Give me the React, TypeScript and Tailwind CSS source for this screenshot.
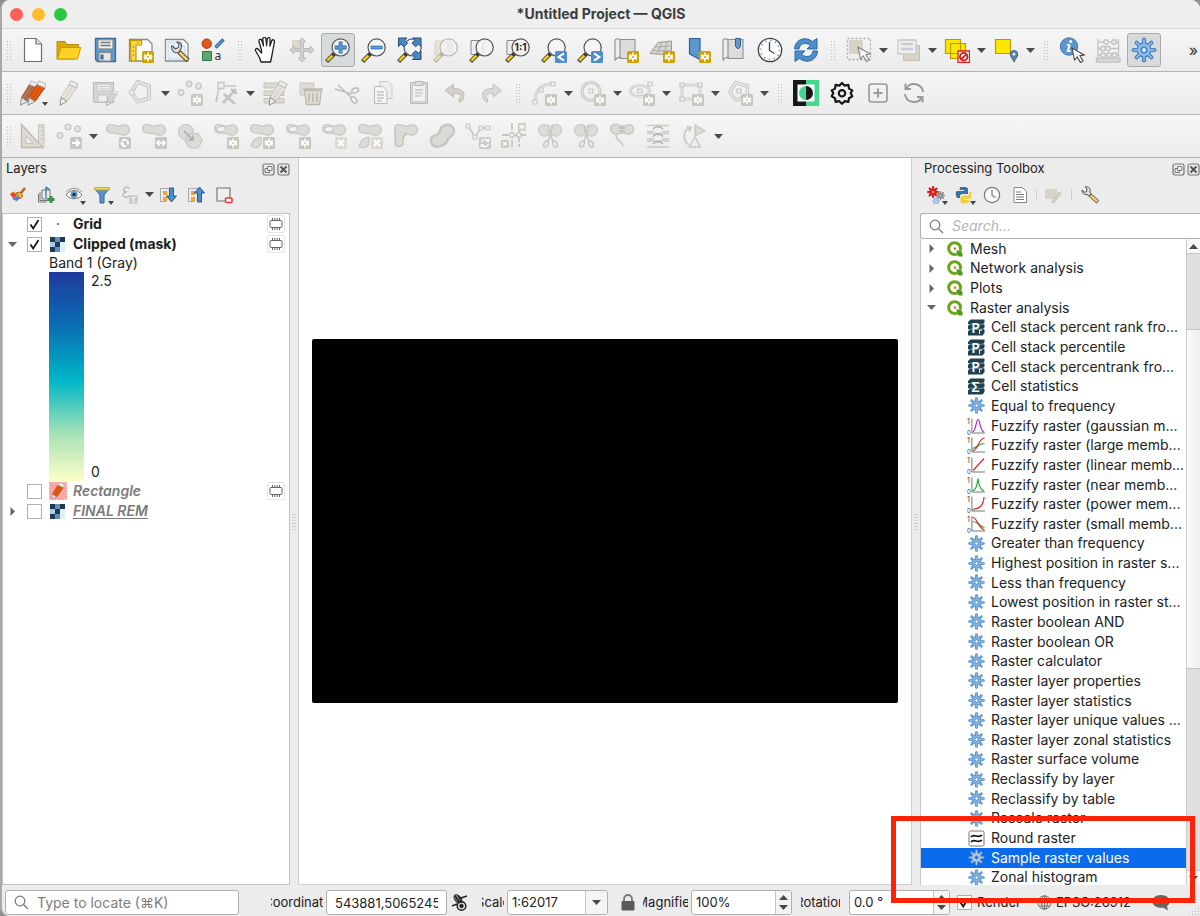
import React, { useState } from 'react';

type Tool = { name: string; icon?: React.ReactNode; menu?: boolean; corner?: boolean; active?: boolean };

const FONT = "font-['Inter','Liberation_Sans',sans-serif]";

// ---------- Drawing helpers ----------

const rays = [0, 45, 90, 135, 180, 225, 270, 315];

function Gear({ cx = 8, cy = 8, r = 7, line = '#4a86c5', fill = '#86b4e4', hole = '#ffffff' }: {
  cx?: number; cy?: number; r?: number; line?: string; fill?: string; hole?: string;
}) {
  const spokes = (width: number, reach: number, color: string) => rays.map((a) => {
    const t = (a * Math.PI) / 180;
    return (
      <line key={`${width}${a}`} x1={cx} y1={cy} x2={cx + Math.sin(t) * reach} y2={cy - Math.cos(t) * reach}
        stroke={color} strokeWidth={width} strokeLinecap="round" />
    );
  });
  return (
    <g>
      {spokes(r * 0.33, r * 0.83, line)}
      <circle cx={cx} cy={cy} r={r * 0.6} fill={line} />
      {spokes(r * 0.14, r * 0.83, fill)}
      <circle cx={cx} cy={cy} r={r * 0.5} fill={fill} />
      <circle cx={cx} cy={cy} r={r * 0.22} fill={hole} stroke={line} strokeWidth={r * 0.12} />
    </g>
  );
}

function Badge({ x = 14, y = 14, fill = '#cfa200', kind = 'star' }: { x?: number; y?: number; fill?: string; kind?: string }) {
  return (
    <g transform={`translate(${x} ${y})`} stroke="#fff" fill="none" strokeWidth="1.5">
      <rect width="12" height="12" rx="1.6" fill={fill} stroke="none" />
      {kind === 'star' && (
        <>
          <path d="M6 1.5v9M2.100 3.700l7.800 4.600M9.900 3.700l-7.800 4.600M1.700 6h8.600" />
          <circle cx="6" cy="6" r="2.4" fill="#fff" stroke="none" />
          <circle cx="6" cy="6" r="1" fill={fill} stroke="none" />
        </>
      )}
      {kind === 'x' && <path d="M3 3l6 6M9 3l-6 6" strokeWidth="2" />}
      {kind === 'right' && <path d="M2 6h6M6 2.8L9.2 6 6 9.2" strokeWidth="2.2" />}
      {kind === 'both' && <path d="M2.5 6h7M4.6 3.4L2 6l2.6 2.6M7.4 3.4L10 6 7.4 8.6" strokeWidth="1.7" />}
      {kind === 'turn' && <path d="M4.2 8.8a3.2 3.2 0 1 1 4.4-1.4M4 6l.4 3.4 3-.8" strokeWidth="1.6" />}
      {kind === 'prev' && <path d="M9 2.4L3.6 6 9 9.6" strokeWidth="2" />}
      {kind === 'next' && <path d="M3 2.4L8.4 6 3 9.6" strokeWidth="2" />}
      {kind === 'cycle' && <path d="M2.4 5.4a3.7 3.7 0 0 1 6.6-1.6M9.6 2v2.4H7M9.6 6.6A3.7 3.7 0 0 1 3 8.2M2.4 10V7.6H5" strokeWidth="1.4" />}
    </g>
  );
}

function Lens({ children }: { children?: React.ReactNode }) {
  return (
    <g>
      <path d="M9.8 16.200L1.6 24.4" stroke="#3d3d3d" strokeWidth="4.200" />
      <path d="M7.4 18.600L2.300 23.700" stroke="#f6cf22" strokeWidth="2.4" />
      <circle cx="15.6" cy="10.4" r="8.6" fill="#f4f4f4" fillOpacity="0.92" stroke="#555" strokeWidth="1.2" />
      {children}
    </g>
  );
}

const GREY = '#c6c6c3';
const PALE = '#dcdbd7';
const BLOB = 'M1.6 5.5C1.6 1.2 6 .8 9.6 2.4S15 3 18 2s6.4 1.4 6.4 4.8-2.6 5.8-6 5.4-5-2.2-8.800-2-8-.7-8-4.700z';

const Blob = ({ inner }: { inner?: boolean }) => (
  <>
    <path d={BLOB} fill={PALE} stroke={GREY} strokeWidth="1.2" />
    {inner && <ellipse cx="8" cy="6.200" rx="4.4" ry="2.600" fill="#f3f3f3" stroke={GREY} strokeWidth="1.2" transform="rotate(-10 8 6)" />}
  </>
);

const LowerBlob = () => <path d="M12 14c-5 0-9 5-10 9 3 3 8 2 10-2z" fill={PALE} stroke={GREY} strokeWidth="1.2" />;

const Dots = () => (
  <g fill="#e6e6e3" stroke={GREY} strokeWidth="1.3">
    <circle cx="12" cy="4" r="2.8" /><circle cx="21.500" cy="6" r="2.8" /><circle cx="4" cy="12.500" r="2.800" />
  </g>
);

const Page = ({ x = 1.5 }: { x?: number }) => (
  <path d={`M${x} 2.500h18l4.500 4.500v17H${x}z`} fill="#fff" stroke="#8a8a8a" strokeWidth="1.300" />
);

const Pencil = ({ body = '#e8590c', edge = '#a33b06', tip = '#e8e4da' }: { body?: string; edge?: string; tip?: string }) => (
  <g strokeWidth="0.9" strokeLinejoin="round">
    <path d="M13 4.500l7.800 3.300L11 21.500 5 17.500z" fill={body} stroke={edge} />
    <path d="M16.900 6.200L8 19.500" stroke={edge} strokeOpacity="0.6" fill="none" />
    <path d="M5 17.500l6 4L4 25.200z" fill={tip} stroke="#888" />
    <path d="M13 4.500L14.800.8l7.200 3-1.200 4z" fill="#ededed" stroke="#b5b5b5" />
  </g>
);

const Wrench = () => (
  <g>
    <path d="M15 15l9 8.500" stroke="#444" strokeWidth="4.600" />
    <path d="M15.500 15.500l8 7.500" stroke="#f0d264" strokeWidth="2.800" />
    <path d="M8.500 9l3 3 3-1.500.5-3-2-2.500c4 0 5 3 4.200 6l-2.200 4c-4 2-7.500-.5-7.500-6z" fill="#e4e4e4" stroke="#555" strokeWidth="1.100" />
  </g>
);

const Scissors = () => (
  <>
    <path d="M12 3C8 0 1 2 1.500 7s4 8 10 5zM14 3c4-3 11-1 10.500 4s-4 8-10 5z" fill={PALE} stroke={GREY} />
    <path d="M11 2l5 17M16 2L11 19" stroke={GREY} strokeWidth="1.500" fill="none" />
    <ellipse cx="9" cy="21" rx="2" ry="3.500" transform="rotate(25 9 21)" fill="none" stroke={GREY} strokeWidth="1.500" />
    <ellipse cx="18" cy="21" rx="2" ry="3.500" transform="rotate(-25 18 21)" fill="none" stroke={GREY} strokeWidth="1.500" />
  </>
);

const Roll = () => (
  <>
    <path d="M5 2.500h17v19H8c-1-3-5-2-5 1z" fill="#dcdcda" stroke="#8f8f8f" strokeWidth="1.100" />
    <path d="M2 4c0-3 5-3 5 0v17c-2-1-4 0-4.500 2C1.800 24 2 22 2 20z" fill="#eeeeec" stroke="#8f8f8f" strokeWidth="1.100" />
  </>
);

const Cursor = ({ x = 13, y = 11 }: { x?: number; y?: number }) => (
  <path transform={`translate(${x} ${y})`} d="M0 0l2.500 12 2.700-3 3.300 5.500 2.600-1.600-3.200-5.200 4.300-.7z" fill="#fff" stroke="#444" strokeWidth="1.100" />
);

const Corners = () => (
  <g fill="#4a86c0" stroke="#234f7c" strokeWidth="1">
    <path d="M1.500 1h8.500L7.800 3.300l2.700 2.900-3.600 3.600-3-2.800-2.400 2.500z" />
    <path d="M24 1h-8.500l2.200 2.300L15 6.200l3.600 3.600 3-2.800L24 9.500z" />
    <path d="M24 22.500h-8.500l2.200-2.300-2.700-2.900 3.600-3.600 3 2.800 2.400-2.500z" />
  </g>
);

// ---------- Main toolbars ----------

const fileTools: Tool[] = [
  { name: 'New project', icon: <><path d="M4.500 1.500h11.500l5.500 5.500v17.500h-17z" fill="#fff" stroke="#6e6e6e" strokeWidth="1.200" /><path d="M16 1.500V7h5.500" fill="#e6e6e6" stroke="#6e6e6e" strokeWidth="1.200" /></> },
  { name: 'Open project', icon: <><path d="M1 4.500h8l2 3h11.500V12L19 22H1z" fill="#d9a90a" stroke="#b98d00" /><path d="M5 10.500h19.700L21.500 22H1.500L3 17z" fill="#fdd222" stroke="#c69a00" /></> },
  { name: 'Save project', icon: <><path d="M3.500 1.500h20v23h-18l-2-2z" fill="#5f97cd" stroke="#3a6b9b" strokeWidth="1.300" /><path d="M6.500 3h14v8.500h-14z" fill="#eee" stroke="#aaa" /><path d="M8.500 5.500h10M8.500 8.500h10" stroke="#777" strokeWidth="1.300" /><path d="M7 15.500h12v8.500H7z" fill="#e5e5e5" stroke="#888" /><path d="M8.500 17.500h3v5h-3z" fill="#3a6b9b" /></> },
  { name: 'New print layout', icon: <><Page /><path d="M2.500 3.500h11V8H8v16H3z" fill="#fbd64d" stroke="#c59a00" strokeWidth="1.200" /><path d="M5.500 9v2M5.500 13v2M5.500 17v2M9 5.500h2" stroke="#c59a00" /><Badge /></> },
  { name: 'Layout manager', icon: <><Page /><path d="M4 5h14v4h3v13H4z" fill="#e8f0f9" stroke="#bcd4ec" /><Wrench /></> },
  { name: 'Style manager', icon: <><circle cx="6.700" cy="6.700" r="4.700" fill="#e2561f" stroke="#a33b0a" /><path d="M15.500 10.500l8-8" stroke="#2d5f94" strokeWidth="3.400" /><path d="M16 10l7-7" stroke="#6ba3db" strokeWidth="1.200" /><path d="M2.500 14.500h9v9h-9z" fill="#5ea873" stroke="#2f7546" /><text x="14.500" y="23" fontSize="12" fill="#333" fontFamily="Noto Sans, sans-serif">a</text></> },
];

const navTools: Tool[] = [
  { name: 'Pan map', icon: <path d="M8.500 13L6 4.500C5.500 2 8.500 1.500 9 4l1.500 5-.7-6.500C9.600-.2 12.600-.3 13 2.300l.6 6.200.6-6.200c.3-2.400 3-2 2.900.4l-.2 6.300 1.700-5c.8-2.100 3.300-1.200 2.800 1L19 18l-1.500 7H8l-1.500-4.500L3 14.500C1.300 11.800 4 10.500 5.500 12.500L8.500 16z" fill="#fff" stroke="#1f1f1f" strokeWidth="1.300" strokeLinejoin="round" /> },
  { name: 'Pan to selection', icon: <><path d="M3 3h12v12H3z" fill="#ddd8ce" /><path d="M13 1l4 4h-2.500v6.500H21V9l4 4-4 4v-2.500h-6.500V21H17l-4 4-4-4h2.500v-6.500H5V17l-4-4 4-4v2.500h6.500V5H9z" fill="#cfcfcf" stroke="#bbb" /></> },
  { name: 'Zoom in', active: true, icon: <Lens><path d="M15.600 4.500v12M9.600 10.500h12" stroke="#2b6ca8" strokeWidth="3.800" /><path d="M15.600 5v11M10 10.500h11" stroke="#5c9ad6" strokeWidth="2.200" /></Lens> },
  { name: 'Zoom out', icon: <Lens><path d="M9.600 10.500h12" stroke="#2b6ca8" strokeWidth="3.600" /><path d="M10 10.500h11" stroke="#5c9ad6" strokeWidth="2" /></Lens> },
  { name: 'Zoom full', icon: <><Lens /><Corners /></> },
  { name: 'Zoom to selection', icon: <g opacity="0.35"><path d="M2 4h14v14H2z" fill="#d8c7a8" stroke="#999" /><Lens><path d="M14 3h6v14h-6z" fill="#ddd" /></Lens></g> },
  { name: 'Zoom to layer', icon: <><path d="M2 3.500h14v14H2z" fill="#eee" stroke="#888" /><Lens><path d="M14 5v11" stroke="#ddd" /></Lens></> },
  { name: 'Zoom to native resolution', icon: <><path d="M2 3.500h14v14H2z" fill="#eee" stroke="#888" /><Lens><text x="15.600" y="14" fontSize="10" fontWeight="700" textAnchor="middle" fill="#222" fontFamily="Inter, sans-serif">1:1</text></Lens></> },
  { name: 'Zoom last', icon: <><Lens /><Badge fill="#4f8cc9" kind="prev" /></> },
  { name: 'Zoom next', icon: <><Lens /><Badge fill="#4f8cc9" kind="next" /></> },
  { name: 'New map view', icon: <><Roll /><Badge /></> },
  { name: 'New 3D map view', icon: <><path d="M9 5.500L22.500 4v14L1 16.500z" fill="#d6d6d3" stroke="#999" /><path d="M6 10l16.500-1M3.500 13.500l19 .5M13 5L8 17M18 4.500l-3 13" stroke="#aaa" fill="none" /><Badge /></> },
  { name: 'New spatial bookmark', icon: <><path d="M4.500 1.500H15v21L4.500 17z" fill="#5f97cd" stroke="#33618f" strokeWidth="1.200" /><Badge /></> },
  { name: 'Show spatial bookmarks', icon: <><Roll /><path d="M14.500 1.500h5v8l-2.500 2.500-2.500-2.500z" fill="#5f97cd" stroke="#33618f" /></> },
  { name: 'Temporal controller', icon: <><circle cx="13" cy="13" r="11.700" fill="#fdfdfd" stroke="#444" strokeWidth="1.300" /><circle cx="13" cy="13" r="9.500" fill="none" stroke="#5b93cc" strokeWidth="1.800" strokeDasharray="1.200 3.770" /><path d="M12.500 5v8.500l5 3" stroke="#444" strokeWidth="1.300" fill="none" /></> },
  { name: 'Refresh', icon: <g fill="#4d8dcc" stroke="#2c68a3" strokeWidth="1" strokeLinejoin="round"><path d="M1.500 12C2 4 9 0 16 2.500l3.500 2L24 1.500V12H14l3.500-3.500C13 5 7 6 6 12z" /><path d="M24.500 14C24 22 17 26 10 23.500l-3.500-2L2 24.500V14h10l-3.500 3.500C13 21 19 20 20 14z" /></g> },
];

const selectTools: Tool[] = [
  { name: 'Select features', menu: true, icon: <><path d="M3 3h14v14H3z" fill="#d9d2c7" /><path d="M1.500 1.500h23v21h-23z" fill="none" stroke="#aaa" strokeWidth="1.300" strokeDasharray="2 2" /><g opacity="0.6"><Cursor x={12} y={10} /></g></> },
  { name: 'Select by value', menu: true, icon: <><path d="M8.500 8.500h16v15h-16z" fill="#d9d2c7" stroke="#c4beb4" /><path d="M3 3h18v14H3z" fill="#eee" stroke="#c9c9c9" strokeWidth="1.300" /><path d="M6 7h12M6 12h12" stroke="#ccc" strokeWidth="2.500" /></> },
  { name: 'Deselect features', menu: true, icon: <><path d="M1.500 2.500h15v14h-15zM6.500 6.500h15v15h-15z" fill="#fde600" stroke="#b89c00" strokeWidth="1.200" /><path d="M14 14h11.500v11.500H14z" fill="#fff" stroke="#e01b1b" strokeWidth="1.300" /><circle cx="19.700" cy="19.700" r="3.800" fill="none" stroke="#d61414" strokeWidth="1.800" /><path d="M17.200 22.300l5.200-5.200" stroke="#d61414" strokeWidth="1.800" /></> },
  { name: 'Select by location', menu: true, icon: <><path d="M2.500 2.500h15v14h-15z" fill="#fde600" stroke="#b89c00" strokeWidth="1.200" /><path d="M21 25c-1-3-3.700-5-3.700-7.800a3.700 3.700 0 0 1 7.400 0C24.700 20 22 22 21 25z" fill="#5b86a8" stroke="#3c6484" /><circle cx="21" cy="17.300" r="1.300" fill="#fff" /></> },
];

const attributeTools: Tool[] = [
  { name: 'Identify features', icon: <><circle cx="10" cy="9.500" r="8.700" fill="#5c96ce" stroke="#3f78b0" /><path d="M10.800 7.500l-2 6.500h2.800M8 8h2.800" stroke="#fff" strokeWidth="2" fill="none" /><circle cx="11.700" cy="4.500" r="1.500" fill="#fff" /><Cursor x={13} y={11} /></> },
  { name: 'Field calculator', icon: <g stroke="#c4c4c2" strokeWidth="1.400" fill="#eee"><path d="M3 2v20M23.500 2v20M3 5h20.500M3 11.500h20.500M3 18h20.500" /><path d="M1.500 21.500h23.500V25H1.500z" fill="#ddd" /><circle cx="11" cy="5" r="2.300" /><circle cx="19" cy="5" r="2.300" /><circle cx="8" cy="11.500" r="2.300" /><circle cx="13" cy="11.500" r="2.300" /><circle cx="8" cy="18" r="2.300" /><circle cx="14" cy="18" r="2.300" /><circle cx="19.500" cy="18" r="2.300" /></g> },
  { name: 'Processing toolbox', active: true, icon: <Gear cx={13} cy={13} r={12.5} line="#3f7fc4" fill="#8fbbe9" hole="#e9eef3" /> },
];

const editTools: Tool[] = [
  { name: 'Current edits', corner: true, icon: <><g transform="translate(-3.500 0)"><Pencil body="#bb7150" edge="#7c4a34" /></g><g transform="translate(4 0)"><Pencil /></g></> },
  { name: 'Toggle editing', icon: <Pencil body="#e5e2da" edge="#c2c0bb" tip="#f0efec" /> },
  { name: 'Save layer edits', icon: <><path d="M1.500 2.500h20v20H3l-1.500-1.500z" fill="#d6d6d4" stroke="#bbb" strokeWidth="1.200" /><path d="M5 4h13v7H5zM6 15h9v7H6z" fill="#eee" stroke="#c4c4c4" /><path d="M7 6.500h9M7 9h9" stroke="#c9c9c9" /><g transform="translate(12 10) scale(.62)"><Pencil body="#dcd8ce" edge="#b5b3ae" tip="#eee" /></g></> },
  { name: 'Digitize with segment', menu: true, icon: <><path d="M3.500 12.500L9.500 2l11.500 4v12.500l-11.500 3z" fill="none" stroke="#c6c6c3" strokeWidth="4" strokeLinejoin="round" /><path d="M3.500 12.500L9.500 2l11.500 4v12.500l-11.500 3z" fill="none" stroke="#e4e4e1" strokeWidth="2" /><circle cx="3.500" cy="12.500" r="2.500" fill="#eee" stroke={GREY} /></> },
  { name: 'Add point feature', icon: <><Dots /><Badge fill="#c9c6bd" /></> },
  { name: 'Vertex tool', menu: true, icon: <><path d="M7 6h16M6 8L3 22" stroke={GREY} strokeWidth="1.700" /><path d="M5 2.500h6v6H5z" fill="#eee" stroke={GREY} strokeWidth="1.300" /><path d="M11 14l11 10M23 9L10 23" stroke={GREY} strokeWidth="3" /><path d="M18 9l6 5" stroke="#bbb" strokeWidth="2" /></> },
  { name: 'Modify attributes', icon: <><path d="M2 3h20v5H2zM2 11h20v4.500H2zM2 18.500h20v4.500H2z" fill="#dedad1" stroke="#c6c3bc" /><g transform="translate(3 0)"><Pencil body="#e5e2da" edge="#c2c0bb" tip="#eee" /></g></> },
  { name: 'Delete selected', icon: <><path d="M2 3h14v12H2z" fill="#e0dcd3" stroke={GREY} /><path d="M6.500 10.500h17l-2 14h-13z" fill="#e1ded6" stroke="#bcb9b1" strokeWidth="1.300" /><path d="M5 9h20M11 13v9M15 13v9M19 13v9" stroke="#bcb9b1" strokeWidth="1.600" /></> },
  { name: 'Cut features', icon: <g stroke="#bdbdbb" strokeWidth="1.500" fill="none"><path d="M1 9l17 5M4 5l14 13" /><ellipse cx="21" cy="10.500" rx="3.500" ry="2.300" transform="rotate(-20 21 10)" /><ellipse cx="20" cy="20" rx="3.500" ry="2.500" transform="rotate(50 20 20)" /></g> },
  { name: 'Copy features', icon: <g stroke="#cbcbc9" fill="#eee"><path d="M10 1.500h8l4 4v13H10z" /><path d="M4.500 6.500H13l4 4v13H4.500z" stroke="#bbb" fill="#f6f6f6" /><path d="M7 12h7M7 15h7M7 18h7M7 21h5" stroke="#aaa" /></g> },
  { name: 'Paste features', icon: <><path d="M4.500 2.500h17v21h-17z" fill="#ddd9cf" stroke="#bbb8b0" /><path d="M6.500 4.500h13v17h-13z" fill="#f1f1f1" stroke="#ccc" /><path d="M9 1.500h8v4H9zM9 10h8M9 13h8M9 16h6" stroke="#b5b5b5" fill="#ddd" /></> },
  { name: 'Undo', icon: <path d="M3 10.500L11.500 4v4.500c7 0 10.500 2.500 10.500 7 0 3.500-2 6-5 6.800v-3.800c1.600-.8 1.700-1.600 1.500-2.500-.3-1.700-2.500-2.800-7-2.800V17z" fill="#d5d1c9" stroke="#bfbcb4" /> },
  { name: 'Redo', icon: <path d="M23.500 10.500L15 4v4.500c-7 0-10.500 2.500-10.500 7 0 3.500 2 6 5 6.800v-3.800c-1.600-.8-1.700-1.600-1.500-2.500.3-1.700 2.500-2.800 7-2.800V17z" fill="#d9d9d7" stroke="#c2c2c0" /> },
];

const node = (x: number, y: number) => <path d={`M${x - 2} ${y - 2}h4v4h-4z`} fill="#f2f2f0" stroke={GREY} strokeWidth="1.200" />;

const shapeTools: Tool[] = [
  { name: 'Circular string', menu: true, icon: <><path d="M4 22C4 9 11 4 22 4" stroke={PALE} strokeWidth="3.500" fill="none" />{node(4, 22)}{node(10, 10)}{node(22, 4)}<Badge fill="#c9c6bd" /></> },
  { name: 'Add circle', menu: true, icon: <><circle cx="11" cy="11.500" r="9" fill="none" stroke={GREY} strokeWidth="3" /><circle cx="11" cy="11.500" r="9" fill="none" stroke="#e9e9e6" strokeWidth="1" />{node(11, 11)}<Badge fill="#c9c6bd" /></> },
  { name: 'Add ellipse', menu: true, icon: <><ellipse cx="11" cy="11" rx="9.500" ry="5.500" fill="none" stroke={GREY} strokeWidth="2.600" /><ellipse cx="11" cy="11" rx="9.500" ry="5.500" fill="none" stroke="#eee" />{node(11, 11)}{node(21, 4)}<Badge fill="#c9c6bd" /></> },
  { name: 'Add rectangle', menu: true, icon: <><path d="M4 5h18v14H4z" fill="none" stroke={PALE} strokeWidth="3.500" />{node(4, 5)}{node(22, 5)}{node(4, 19)}<Badge fill="#c9c6bd" /></> },
  { name: 'Add regular polygon', menu: true, icon: <><path d="M3 12L8.500 2.500 20.500 6v11L8.500 20z" fill="none" stroke={GREY} strokeWidth="3.500" strokeLinejoin="round" /><path d="M3 12L8.500 2.500 20.500 6v11L8.500 20z" fill="none" stroke="#eaeae8" strokeWidth="1.500" />{node(12, 11)}<Badge fill="#c9c6bd" /></> },
];

const pluginTools: Tool[] = [
  { name: 'Contrast plugin', icon: <><path d="M0 0h13v26H0z" fill="#15181c" /><path d="M13 0h13v26H13z" fill="#45d68f" /><path d="M4.500 4.500h17v17h-17z" fill="#fff" /><path d="M13 6a7 7 0 0 0 0 14z" fill="#45d68f" /><path d="M13 6a7 7 0 0 1 0 14z" fill="#15181c" /></> },
  { name: 'Plugin settings', icon: <g fill="none" stroke="#161616" strokeWidth="2.200" strokeLinejoin="round"><path d="M13 3l2.700 2.600 3.700-.7.600 3.700 3.300 1.800L21.700 13l1.600 3.400-3.300 1.800-.6 3.700-3.700-.7L13 23.800l-2.700-2.600-3.700.7-.6-3.700-3.300-1.800L4.300 13l-1.600-2.600L6 8.600l.6-3.700 3.700.7z" /><circle cx="13" cy="13.300" r="3.200" /></g> },
  { name: 'Add panel', icon: <g fill="none" stroke="#999" strokeWidth="1.600"><rect x="4" y="4" width="18" height="18" rx="2.500" /><path d="M13 8.500v9M8.500 13h9" strokeWidth="2" /></g> },
  { name: 'Reload plugin', icon: <g fill="none" stroke="#999" strokeWidth="2"><path d="M5 9a9 9 0 0 1 17 3M21 17a9 9 0 0 1-17-3" /><path d="M4.500 3.500V9H10M21.500 22.500V17H16" /></g> },
];

const advancedTools: Tool[] = [
  { name: 'Advanced digitizing', icon: <><path d="M1.500 1.500L23 24.500H1.500z" fill="#dedad2" stroke="#bdbab3" strokeWidth="1.300" /><path d="M6 13l7 7.500H6z" fill="#f2f2f2" stroke="#c4c1ba" /><path d="M18.500 1.500h5.500V24h-1L18.500 19z" fill="#e2dfd7" stroke="#c9c6be" /><path d="M21 4h3M21 8h3M21 12h3M21 16h3" stroke="#bbb" /></> },
  { name: 'Move feature', menu: true, icon: <><Dots /><Badge fill="#c6c6c2" kind="right" /></> },
  { name: 'Rotate feature', icon: <><Blob /><Badge fill="#c6c6c2" kind="turn" /></> },
  { name: 'Scale feature', icon: <><Blob /><Badge fill="#c6c6c2" kind="both" /></> },
  { name: 'Simplify feature', icon: <g fill={PALE} stroke={GREY} strokeWidth="1.200"><circle cx="9" cy="9" r="7.500" /><path d="M12 10.500h9l4.500 7-4.500 7.500h-8.500L8 18z" /><path d="M7 8l9 9M16 12.500V17h-4.500" stroke="#aaa" fill="none" strokeWidth="1.500" /></g> },
  { name: 'Add ring', icon: <><Blob inner /><Badge fill="#c9c6bd" /></> },
  { name: 'Add part', icon: <><Blob /><LowerBlob /><Badge fill="#c9c6bd" /></> },
  { name: 'Fill ring', icon: <><Blob inner /><Badge fill="#c9c6bd" /></> },
  { name: 'Delete ring', icon: <><Blob inner /><Badge fill="#dbd9d2" kind="x" /></> },
  { name: 'Delete part', icon: <><Blob /><LowerBlob /><Badge fill="#dbd9d2" kind="x" /></> },
  { name: 'Reshape features', icon: <><Blob /><path d="M2 6c0 5 1 9 0 14 1 5 8 4 8 0 0-3-1-6 3-8.500" fill={PALE} stroke="#c6c1b6" strokeWidth="1.500" /></> },
  { name: 'Offset curve', icon: <path d="M12 5c4-5 12-4 13 2s-5 6-7 11-12 8-15 3 0-8 4-9 4-5 5-7z" fill={PALE} stroke={GREY} strokeWidth="2.500" /> },
  { name: 'Rotate point symbols', icon: <><path d="M3 3l7 11 6-9h9" stroke={GREY} strokeWidth="1.500" fill="none" />{node(3, 3)}{node(10, 14)}{node(16, 5)}{node(23, 5)}<Badge fill="#c9c9c6" kind="cycle" /></> },
  { name: 'Trim or extend', icon: <><path d="M11 0v26M18 4v20M1 12h24" stroke={GREY} strokeWidth="1.800" strokeDasharray="7 1.500" />{node(11, 12)}{node(18, 12)}<g transform="translate(17 0) scale(.65)"><Badge x={0} y={0} fill="#c9c6bd" /></g><g transform="translate(0 17) scale(.65)"><Badge x={0} y={0} fill="#c9c6bd" kind="x" /></g></> },
  { name: 'Split features', icon: <Scissors /> },
  { name: 'Split parts', icon: <Scissors /> },
  { name: 'Merge features', icon: <g fill={PALE} stroke={GREY} strokeWidth="1.300"><path d="M1.500 6c0-5 7-6 9-3h6c3-3 8-1 8 3s-5 7-9 4h-4c-4 3-10 0-10-4z" /><path d="M10 5h6M10 8h6" stroke="#bbb" /><path d="M7 12c0 6 6 6 7 11" fill="none" strokeWidth="1.600" /></g> },
  { name: 'Merge attributes', icon: <g stroke="#cbc9c3" strokeWidth="1.500" fill="none"><path d="M2 2.500h22M2 8.500h7M17 8.500h7M2 10.500h22M2 16h7M17 16h7M2 18h22M2 24h22" /><path d="M8 6c2-3 8-3 10 0M8 13.500c2-3 8-3 10 0M8 21c2-3 8-3 10 0" stroke="#b0b0ae" strokeWidth="1.400" /></g> },
  { name: 'Mirror feature', menu: true, icon: <g fill={PALE} stroke={GREY} strokeWidth="1.300"><path d="M14 2l10 6-10 5z" /><path d="M14 14l5.500 10h-11z" fill="#eee" /><path d="M8 22C1 17 2 7 9 5M5.500 3.500L10 4.500 8 9" fill="none" strokeWidth="1.700" /></g> },
];

const Arrow = ({ up }: { up?: boolean }) => (
  <svg width="9" height="5" viewBox="0 0 9 5" aria-hidden="true">
    <path d={up ? 'M0 5h9L4.500 0z' : 'M0 0h9L4.500 5z'} fill="#4a4a4a" />
  </svg>
);

const CornerArrow = () => (
  <svg className="absolute right-0.5 bottom-1" width="6" height="4" viewBox="0 0 6 4" aria-hidden="true">
    <path d="M0 0h6L3 4z" fill="#444" />
  </svg>
);

function Handle() {
  return (
    <span className="flex w-[17px] shrink-0 justify-center first:w-[13px]">
      <span className="h-5 w-[6px] bg-[radial-gradient(circle,#bdbdbd_1px,transparent_1px)] bg-[length:3px_3px]" />
    </span>
  );
}

function ToolGroup({ tools }: { tools: Tool[] }) {
  return (
    <>
      <Handle />
      {tools.map((tool) => (
        <React.Fragment key={tool.name}>
          <button
            type="button"
            aria-label={tool.name}
            aria-pressed={tool.active}
            className={`relative mx-px flex size-[34px] shrink-0 items-center justify-center rounded-[3px] ${tool.active ? 'border border-[#aaaaaa] bg-[#d8dbdb]' : ''}`}
          >
            <svg className="size-[26px] shrink-0" viewBox="0 0 26 26" fill="none">{tool.icon}</svg>
            {tool.corner && <CornerArrow />}
          </button>
          {tool.menu && (
            <button type="button" aria-label={`${tool.name} options`} className="flex h-[34px] w-[13px] shrink-0 items-center justify-center">
              <Arrow />
            </button>
          )}
        </React.Fragment>
      ))}
    </>
  );
}

function ToolBar({ children }: { children: React.ReactNode }) {
  return (
    <div role="toolbar" className="flex h-[43px] shrink-0 items-center overflow-hidden border-b border-[#b4b4b4] bg-linear-to-b from-[#f6f6f6] to-[#ebebeb]">
      {children}
    </div>
  );
}

// ---------- Dock panels ----------

function DockTitle({ title }: { title: string }) {
  return (
    <div className="flex h-[22px] shrink-0 items-center justify-between pl-1 text-[13px] text-[#222]">
      <h2>{title}</h2>
      <div className="flex gap-0.5">
        <button type="button" aria-label={`Float ${title}`}>
          <svg width="13" height="13" viewBox="0 0 13 13" fill="none" stroke="#777">
            <rect x="1" y="1" width="11" height="11" rx="2" strokeWidth="1.200" />
            <rect x="5.500" y="3.500" width="4.500" height="4" rx=".5" /><path d="M5 5.500H3v4h4.500V8" />
          </svg>
        </button>
        <button type="button" aria-label={`Close ${title}`}>
          <svg width="13" height="13" viewBox="0 0 13 13" fill="none" stroke="#777">
            <rect x="1" y="1" width="11" height="11" rx="2" strokeWidth="1.200" />
            <path d="M3.500 3.500l6 6M9.500 3.500l-6 6" stroke="#555" strokeWidth="2" />
          </svg>
        </button>
      </div>
    </div>
  );
}

const layerTools: Tool[] = [
  { name: 'Open styling panel', icon: <><path d="M1 8l5-3 7 6-6 5z" fill="#f4d23c" /><path d="M1 8l3-2 4 3-4 3z" fill="#e8403a" /><path d="M3 13l5 2 3-3-4-2z" fill="#4d7fe0" /><path d="M7 7l4-1 3 4-3 3z" fill="#e9b04a" stroke="#a06b1c" /><path d="M12 7l4-5" stroke="#b5651d" strokeWidth="2.500" /></> },
  { name: 'Add group', icon: <><path d="M5 4h8v9H5zM1.500 8v8h8M3 6v8.500h8" fill="#eee" stroke="#777" /><path d="M9 1v11M9 1l4 3" stroke="#3c6f9c" strokeWidth="1.300" /><path d="M14 10v7M10.500 13.500h7" stroke="#3f8f4f" strokeWidth="3" /></> },
  { name: 'Manage map themes', corner: true, icon: <><path d="M1 9c4-6 12-6 16 0-4 5-12 5-16 0z" fill="#fff" stroke="#777" /><circle cx="9" cy="8.500" r="3.600" fill="#5c96ce" /><circle cx="9" cy="8.500" r="1.600" fill="#222" /><path d="M1 6c5-5 11-5 16 0" stroke="#999" /></> },
  { name: 'Filter legend', corner: true, icon: <><path d="M2 3h14l-5 6v8H7V9z" fill="#5c96ce" stroke="#2f6194" /><path d="M1.500 1.500h15v2.500h-15z" fill="#f5da4a" stroke="#b59a1a" strokeWidth=".7" /></> },
  { name: 'Filter by expression', menu: true, icon: <><path d="M8.500 2.500C5 0 1.500 2 3 5c.6 1 2 1 3 1-4 0-5 3-3 4.500 2 1 4 .7 5.500-.5" stroke="#bbb" strokeWidth="1.500" /><path d="M9 16v-6h7v6M9 13h2v4H8M16 13h-2v4h2.500" stroke="#c4c4c4" strokeWidth="1.300" /></> },
  { name: 'Expand all', icon: <><path d="M1.500 2v14M1.500 2.500h9M1.500 15.500h6" stroke="#aaa" /><path d="M4 5h4v4H4zM4 11h4v4H4z" fill="#f7a233" /><path d="M10.500 2h4v8h3L12.500 16 7.500 10h3z" fill="#4d8dcc" stroke="#2b5a89" /></> },
  { name: 'Collapse all', icon: <><path d="M1.500 2v14M1.500 2.500h9M1.500 15.500h6" stroke="#aaa" /><path d="M4 5h4v4H4zM4 11h4v4H4z" fill="#f7a233" /><path d="M10.500 16h4V7h3L12.500 1 7.500 7h3z" fill="#4d8dcc" stroke="#2b5a89" /></> },
  { name: 'Remove layer', icon: <><path d="M2 2h13v13H2z" fill="#eee" stroke="#777" strokeWidth="1.200" /><rect x="10.500" y="12" width="6.500" height="4.500" rx="1" fill="#fff" stroke="#e33" strokeWidth="1.500" /></> },
];

const toolboxTools: Tool[] = [
  { name: 'Models', corner: true, icon: <><Gear cx={6} cy={6} r={6} line="#c81414" fill="#e01e1e" hole="#fff" /><Gear cx={13.500} cy={9.500} r={4.500} line="#777" fill="#999" hole="#eee" /><Gear cx={9} cy={15} r={3.800} line="#86b0da" fill="#a9cbed" /></> },
  { name: 'Scripts', corner: true, icon: <><path d="M5 1h6l2 1.500V8H6.500L5 9.500V12H2L.8 9V6L2 5h7V4H4.500z" fill="#3672a8" /><path d="M14 5l2.500 1.500v4L15 13H9v1h5v2l-2 1.500H7L5.500 16v-5L7 9.500h6L14 8z" fill="#f7cf3c" /></> },
  { name: 'History', icon: <><circle cx="9" cy="9" r="7.700" fill="#fafafa" stroke="#777" strokeWidth="1.200" /><path d="M9 4v5.500l3.500 2" stroke="#777" strokeWidth="1.200" /></> },
  { name: 'Results viewer', icon: <><path d="M3 1.500h8.500l4 4v11H3z" fill="#fff" stroke="#888" /><path d="M5 6h5M5 8.500h8M5 11h8M5 13.500h8" stroke="#777" /></> },
];

function SmallTool({ tool }: { tool: Tool }) {
  return (
    <>
      <button type="button" aria-label={tool.name} className="relative flex h-7 w-7 shrink-0 items-center justify-center">
        <svg width="18" height="18" viewBox="0 0 18 18" fill="none">{tool.icon}</svg>
        {tool.corner && <CornerArrow />}
      </button>
      {tool.menu && <button type="button" aria-label={`${tool.name} options`} className="flex w-[10px] shrink-0 justify-center"><Arrow /></button>}
    </>
  );
}

const Chip = () => (
  <button type="button" aria-label="Temporary scratch layer" className="flex size-[18px] shrink-0 items-center justify-center rounded-[2px] border border-[#e4e4e4] bg-white">
    <svg width="14" height="12" viewBox="0 0 14 12" fill="none" stroke="#666" className="shrink-0">
      <rect x="1" y="2.500" width="12" height="7" rx="1" />
      <path d="M3.500 0v2.500M5.800 0v2.500M8.200 0v2.500M10.500 0v2.500M3.500 9.500V12M5.800 9.500V12M8.200 9.500V12M10.500 9.500V12" />
    </svg>
  </button>
);

const RasterIcon = () => (
  <svg width="15" height="15" viewBox="0 0 15 15">
    <path d="M0 0h15v15H0z" fill="#a9cbee" />
    <path d="M0 0h5v5H0zM10 0h5v5h-5zM5 5h5v5H5zM0 10h5v5H0z" fill="#1f3a4e" />
    <path d="M5 0h5v5H5zM5 10h5v5H5z" fill="#5e8fbd" /><path d="M10 5h5v10h-5z" fill="#e2eefa" />
  </svg>
);

function CheckBox({ label, checked, onChange }: { label: string; checked: boolean; onChange: () => void }) {
  return (
    <span className="grid size-[15px] shrink-0 place-items-center">
      <input type="checkbox" aria-label={label} checked={checked} onChange={onChange} className="peer col-start-1 row-start-1 size-[15px] appearance-none border border-[#b0b0b0] bg-white" />
      <svg className="pointer-events-none col-start-1 row-start-1 hidden peer-checked:block" width="11" height="11" viewBox="0 0 11 11" fill="none">
        <path d="M1.500 5.500l2.700 4L9.500 1" stroke="#111" strokeWidth="1.700" />
      </svg>
    </span>
  );
}

function Expander({ open }: { open: boolean }) {
  return (
    <svg width="9" height="9" viewBox="0 0 9 9" className="shrink-0" aria-hidden="true">
      <path d={open ? 'M0 2h9L4.500 7z' : 'M2.500 0v9L7 4.500z'} fill="#666" />
    </svg>
  );
}

function LayersPanel() {
  const [shown, setShown] = useState<Record<string, boolean>>({ Grid: true, 'Clipped (mask)': true, Rectangle: false, 'FINAL REM': false });

  const row = (name: string, icon: React.ReactNode, style: string, chip: boolean, open?: boolean) => (
    <li className="flex h-5 items-center pr-1 pl-[5px]">
      <span className="w-[19px] shrink-0">{open !== undefined && <Expander open={open} />}</span>
      <CheckBox label={name} checked={shown[name]} onChange={() => setShown({ ...shown, [name]: !shown[name] })} />
      <span className="flex w-[31px] shrink-0 items-center justify-center">{icon}</span>
      <span className={`grow truncate text-sm leading-5 ${style}`}>{name}</span>
      {chip && <Chip />}
    </li>
  );

  return (
    <aside className="flex w-[288px] shrink-0 flex-col">
      <DockTitle title="Layers" />
      <div className="flex h-[33px] shrink-0 items-center pb-1 pl-0.5">
        {layerTools.map((tool) => <SmallTool key={tool.name} tool={tool} />)}
      </div>
      <ul className="grow border border-[#c2c2c2] bg-white">
        {row('Grid', <span className="size-0.5 rounded-full bg-[#555]" />, 'font-bold text-[#1e1e1e]', true)}
        {row('Clipped (mask)', <RasterIcon />, 'font-bold text-[#1e1e1e]', true, true)}
        <li className="pl-[46px] text-sm leading-[18px] text-[#222]">Band 1 (Gray)</li>
        <li className="flex h-[209px] pl-[46px] text-sm leading-[18px] text-[#222]">
          <span className="w-[35px] bg-[linear-gradient(#1f3a9c,#0a6cb3_25%,#00b7c7_52%,#a9e3b5_78%,#fdfdc8)]" />
          <span className="flex flex-col justify-between pl-[7px]">
            <span>2.5</span>
            <span>0</span>
          </span>
        </li>
        {row('Rectangle', <svg width="18" height="18" viewBox="0 0 26 26"><path d="M.7.700h24.600v24.600H.7z" fill="#ffa5a5" stroke="#f37777" strokeDasharray="2 2" /><Pencil /></svg>, 'font-semibold text-[#7a7a7a] italic', true)}
        {row('FINAL REM', <RasterIcon />, 'font-semibold text-[#7a7a7a] italic underline underline-offset-2', false, false)}
      </ul>
    </aside>
  );
}

type Algorithm = { label: string; icon: string };

const groups = ['Mesh', 'Network analysis', 'Plots', 'Raster analysis'];

const algorithms: Algorithm[] = [
  { label: 'Cell stack percent rank fro...', icon: 'P' },
  { label: 'Cell stack percentile', icon: 'P' },
  { label: 'Cell stack percentrank fro...', icon: 'P' },
  { label: 'Cell statistics', icon: 'Σ' },
  { label: 'Equal to frequency', icon: 'gear' },
  { label: 'Fuzzify raster (gaussian m...', icon: 'gaussian' },
  { label: 'Fuzzify raster (large memb...', icon: 'large' },
  { label: 'Fuzzify raster (linear memb...', icon: 'linear' },
  { label: 'Fuzzify raster (near memb...', icon: 'near' },
  { label: 'Fuzzify raster (power mem...', icon: 'power' },
  { label: 'Fuzzify raster (small memb...', icon: 'small' },
  { label: 'Greater than frequency', icon: 'gear' },
  { label: 'Highest position in raster s...', icon: 'gear' },
  { label: 'Less than frequency', icon: 'gear' },
  { label: 'Lowest position in raster st...', icon: 'gear' },
  { label: 'Raster boolean AND', icon: 'gear' },
  { label: 'Raster boolean OR', icon: 'gear' },
  { label: 'Raster calculator', icon: 'gear' },
  { label: 'Raster layer properties', icon: 'gear' },
  { label: 'Raster layer statistics', icon: 'gear' },
  { label: 'Raster layer unique values ...', icon: 'gear' },
  { label: 'Raster layer zonal statistics', icon: 'gear' },
  { label: 'Raster surface volume', icon: 'gear' },
  { label: 'Reclassify by layer', icon: 'gear' },
  { label: 'Reclassify by table', icon: 'gear' },
  { label: 'Rescale raster', icon: 'gear' },
  { label: 'Round raster', icon: 'round' },
  { label: 'Sample raster values', icon: 'gear' },
  { label: 'Zonal histogram', icon: 'gear' },
];

const curves: Record<string, { d: string; color: string }[]> = {
  gaussian: [{ d: 'M5.500 14.500C9 14 9 2 11 2s2 12 6 12.500', color: '#a02fd0' }],
  large: [{ d: 'M5.500 12c5-1 5-5 12-5', color: '#21a636' }, { d: 'M5.500 14.500C12 13 11 2 17.500 1.500', color: '#e02424' }],
  linear: [{ d: 'M6 14L17 2', color: '#e02424' }],
  near: [{ d: 'M5.500 14.500C9.500 13 10 8 11 2c1 6 1.500 11 6 12.500', color: '#21a636' }],
  power: [{ d: 'M5.500 14C12 13 16.500 11 17 1.500', color: '#e02424' }],
  small: [{ d: 'M5.500 6c6 0 5 4 12 6', color: '#21a636' }, { d: 'M5.500 1.500C11 3 11 13 17.500 14.500', color: '#e02424' }],
};

function AlgorithmIcon({ icon, selected }: { icon: string; selected: boolean }) {
  if (curves[icon]) {
    return (
      <svg width="18" height="18" viewBox="0 0 18 17" fill="none">
        <text x="0" y="6" fontSize="7" fill="#333" fontFamily="Inter, sans-serif">1</text>
        <text x="0" y="17" fontSize="6" fill="#333" fontFamily="Inter, sans-serif">0</text>
        <path d="M4.900 1v14.500H18" stroke="#777" />
        {curves[icon].map((c) => <path key={c.d} d={c.d} stroke={c.color} strokeWidth="1.200" />)}
      </svg>
    );
  }
  if (icon === 'P' || icon === 'Σ') {
    return (
      <svg width="18" height="17" viewBox="0 0 18 17">
        <path d="M3.500.500H17.500v3l-1.500 1.500 1.500.5v3l-1.500 1.500 1.500.5v3.500l-2 2.500H1v-4l1.500-1.500L1 10V7l1.500-1.500L1 5V3z" fill="#22404f" />
        <path d="M2 5.300h14M2 10.300h14" stroke="#6c94aa" />
        <text x="8.500" y="13.500" fontSize="14" fontWeight="600" textAnchor="middle" fill="#fff" fontFamily="Noto Sans, sans-serif">{icon}</text>
        {icon === 'P' && <path d="M12.500 15v-4M12.500 12c.5-1 1.500-1 2.500-1" stroke="#fff" fill="none" />}
      </svg>
    );
  }
  if (icon === 'round') {
    return (
      <svg width="17" height="17" viewBox="0 0 17 17" fill="none">
        <rect x="1" y="1" width="15" height="15" rx="1.500" fill="#fff" stroke="#777" />
        <path d="M3 7c3-4 7 2 11-2M3 12c3-4 7 2 11-2" stroke="#111" strokeWidth="1.700" />
      </svg>
    );
  }
  return (
    <svg width="17" height="17" viewBox="0 0 16 16">
      {selected ? <Gear r={7.500} line="#6da0d8" fill="#b9c7d2" hole="#0f6ee8" /> : <Gear r={7.800} />}
    </svg>
  );
}

const QIcon = () => (
  <svg width="16" height="16" viewBox="0 0 16 16" fill="none" className="shrink-0">
    <circle cx="7.600" cy="7.600" r="5.900" stroke="#6aa51a" strokeWidth="3" />
    <path d="M8.500 8.500l6.500 6.500" stroke="#fff" strokeWidth="4.500" />
    <path d="M9.500 9.500H13l2.500 2.500v3.500H12l-2.500-2.500z" fill="#4b9a22" />
    <path d="M6.800 6.500h2v2z" fill="#ef7d1a" /><circle cx="8" cy="7.800" r="1.300" fill="#ef7d1a" />
  </svg>
);

function ToolboxPanel() {
  const [selected, setSelected] = useState('Sample raster values');
  const [query, setQuery] = useState('');

  return (
    <aside className="flex w-[280px] shrink-0 flex-col">
      <DockTitle title="Processing Toolbox" />
      <div className="flex h-[33px] shrink-0 items-center pb-1 pl-0.5">
        {toolboxTools.map((tool) => <SmallTool key={tool.name} tool={tool} />)}
        <span className="mx-0.5 h-3 w-px shrink-0 bg-[#cfcfcf]" />
        <SmallTool tool={{ name: 'Edit in place', icon: <><path d="M1 3h12v10H1z" fill="#d9d4ca" /><path d="M15 6l2 1.500-6 8-3 1.500 1-3.500z" fill="#d5d2cb" stroke="#c4c1b9" /></> }} />
        <span className="mx-1 h-3 w-px shrink-0 bg-[#cfcfcf]" />
        <SmallTool tool={{ name: 'Options', icon: <><path d="M9 9l8 7" stroke="#555" strokeWidth="4" /><path d="M9.500 9.500l7 6" stroke="#f0d264" strokeWidth="2.400" /><path d="M1 4l3 2.500L6 5 5.500 2 4 1c4-1 6 2 5 5l1 2-2 2-2-1.500C3 9 1 7 1 4z" fill="#ddd" stroke="#555" /></> }} />
      </div>
      <label className="flex h-[26px] shrink-0 items-center gap-2 rounded-l-[3px] border border-r-0 border-[#b0b0b0] bg-white pl-2">
        <svg width="15" height="15" viewBox="0 0 15 15" fill="none" stroke="#777" strokeWidth="1.200" className="shrink-0"><circle cx="6" cy="6" r="4.800" /><path d="M9.500 9.500l4.500 4.500" /></svg>
        <input aria-label="Search algorithms" value={query} onChange={(e) => setQuery(e.target.value)} placeholder="Search..." className="w-full bg-transparent text-sm placeholder-[#b5b5b5] outline-none placeholder:italic" />
      </label>
      <div className="flex min-h-0 grow">
        <ul role="tree" className="-mb-0.5 flex min-w-0 grow flex-col border-l border-[#c8c8c8] bg-white text-sm">
          {groups.map((name) => (
            <li key={name} className="flex min-h-0 flex-1 items-center pl-[6px] text-[#222]">
              <Expander open={name === 'Raster analysis'} />
              <span className="w-[11px]" />
              <QIcon />
              <span className="pl-[7px] whitespace-nowrap">{name}</span>
            </li>
          ))}
          {algorithms.map((a) => (
            <li key={a.label} className="flex min-h-0 flex-1">
              <button
                type="button"
                onClick={() => setSelected(a.label)}
                className={`flex w-full items-center gap-1.5 overflow-hidden pl-[46px] whitespace-nowrap ${selected === a.label ? 'bg-[#0a6bec] text-white' : 'text-[#222]'}`}
              >
                <span className="flex w-[18px] shrink-0 justify-center"><AlgorithmIcon icon={a.icon} selected={selected === a.label} /></span>
                {a.label}
              </button>
            </li>
          ))}
        </ul>
        {/* Scroll bar */}
        <div className="flex w-[14px] shrink-0 flex-col border-l border-[#cccccc] bg-[#dfdfdf]">
          <span className="flex h-[15px] items-center justify-center border-b border-[#c8c8c8] bg-[#f6f6f6]"><Arrow up /></span>
          <span className="grow-75" />
          <span className="grow-340 border-y border-[#c4c4c4] bg-linear-to-r from-[#fafafa] to-[#eeeeee]" />
          <span className="grow-202" />
          <span className="flex h-[15px] items-center justify-center border-t border-[#c8c8c8] bg-[#f6f6f6]"><Arrow /></span>
        </div>
      </div>
    </aside>
  );
}

function Splitter() {
  return (
    <div className="flex w-2 shrink-0 items-center justify-center">
      <span className="h-[18px] w-1 bg-[radial-gradient(circle,#d0d0d0_1px,transparent_1px)] bg-[length:2px_3px]" />
    </div>
  );
}

// ---------- Status bar ----------

const field = 'h-[25px] rounded-[3px] border border-[#b0b0b0] bg-white text-[13px] text-[#222]';

function CutLabel({ id, text, width }: { id: string; text: string; width: string }) {
  return (
    <label htmlFor={id} className={`flex shrink-0 justify-center overflow-hidden text-[13px] text-[#222] ${width}`}>{text}</label>
  );
}

function SpinBox({ id, value }: { id: string; value: string }) {
  return (
    <span className={`flex w-[101px] shrink-0 overflow-hidden ${field}`}>
      <input id={id} defaultValue={value} className="min-w-0 grow pl-1 outline-none" />
      <span className="flex w-4 shrink-0 flex-col items-center justify-center gap-[5px] border-l border-[#c4c4c4] bg-[#f4f4f4]">
        <button type="button" aria-label="Increase" className="flex"><Arrow up /></button>
        <button type="button" aria-label="Decrease" className="flex"><Arrow /></button>
      </span>
    </span>
  );
}

function StatusBar() {
  const [render, setRender] = useState(true);

  return (
    <footer className="relative flex h-[31px] shrink-0 items-center overflow-hidden bg-[#ececec] pt-1 pl-[3px]">
      <label className={`flex w-[234px] shrink-0 items-center gap-2 px-2 ${field}`}>
        <svg width="15" height="15" viewBox="0 0 15 15" fill="none" stroke="#777" strokeWidth="1.200" className="shrink-0"><circle cx="6" cy="6" r="4.800" /><path d="M9.500 9.500l4.500 4.500" /></svg>
        <input aria-label="Locator" placeholder="Type to locate (⌘K)" className="min-w-0 grow text-sm placeholder-[#7d7d7d] outline-none" />
      </label>
      <span className="w-8 shrink-0" />
      <CutLabel id="coordinate" text="Coordinate" width="w-[52px]" />
      <input id="coordinate" defaultValue="543881,5065245" className={`ml-[3px] w-[121px] shrink-0 px-2 outline-none ${field}`} />
      <button type="button" aria-label="Toggle extents" className="ml-1 shrink-0">
        <svg width="18" height="18" viewBox="0 0 18 18" fill="none" stroke="#222">
          <ellipse cx="7" cy="5" rx="5" ry="3" transform="rotate(50 7 5)" fill="#888" /><circle cx="10.500" cy="12" r="4.300" fill="#ddd" strokeWidth="1.500" />
          <circle cx="10.500" cy="12" r="1.700" fill="#222" /><path d="M4 2l5 7M7 1l4 8M1 12l5-2M10 4l6-2" strokeWidth="1.400" />
        </svg>
      </button>
      <span className="w-[13px] shrink-0" />
      <CutLabel id="scale" text="Scale" width="w-[22px]" />
      <span className={`relative ml-[3px] flex w-[101px] shrink-0 overflow-hidden ${field}`}>
        <select id="scale" className="w-full appearance-none pl-1 outline-none">
          <option>1:62017</option>
        </select>
        <span className="pointer-events-none absolute inset-y-0 right-0 flex w-[22px] items-center justify-center border-l border-[#c4c4c4] bg-[#f4f4f4]"><Arrow /></span>
      </span>
      <button type="button" aria-label="Lock scale" className="mr-2 ml-[13px] shrink-0">
        <svg width="14" height="17" viewBox="0 0 14 17" fill="none"><path d="M3 8V5a4 4 0 0 1 8 0v3" stroke="#777" strokeWidth="1.800" /><rect x=".5" y="7" width="13" height="9.500" rx="1" fill="#5a5a5a" /></svg>
      </button>
      <CutLabel id="magnifier" text="Magnifier" width="w-[45px]" />
      <span className="w-[3px] shrink-0" />
      <SpinBox id="magnifier" value="100%" />
      <span className="w-[9px] shrink-0" />
      <CutLabel id="rotation" text="Rotation" width="w-[39px]" />
      <span className="w-[9px] shrink-0" />
      <SpinBox id="rotation" value="0.0 °" />
      <span className="w-[7px] shrink-0" />
      <CheckBox label="Render" checked={render} onChange={() => setRender(!render)} />
      <span className="shrink-0 pl-[5px] text-[13px] text-[#222]">Render</span>
      <button type="button" className="ml-4 flex shrink-0 items-center gap-1 text-[13px] text-[#222]">
        <svg width="15" height="15" viewBox="0 0 15 15" fill="none" stroke="#777"><circle cx="7.500" cy="7.500" r="6.700" fill="#ddd" /><ellipse cx="7.500" cy="7.500" rx="3" ry="6.700" /><path d="M.8 7.500h13.400M2 4h11M2 11h11M7.500.8v13.400" /></svg>
        EPSG:26912
      </button>
      <button type="button" aria-label="Messages" className="mr-[30px] ml-auto shrink-0">
        <svg width="18" height="17" viewBox="0 0 18 17"><path d="M9 1c5 0 8.500 2.800 8.500 6.500 0 2-1 3.500-2.500 4.600l1 4.400-4.500-2.800C6 14.500.5 12 .5 7.500.5 3.800 4 1 9 1z" fill="#666" /></svg>
      </button>
      <span className="absolute right-0 bottom-0 size-3 bg-[radial-gradient(circle,#b5b5b5_1px,transparent_1px)] bg-[length:3px_3px] [clip-path:polygon(100%_0,100%_100%,0_100%)]" />
    </footer>
  );
}

export default function App() {
  return (
    <div className="h-screen bg-[#8f8f8f]">
      <div className={`relative flex h-full flex-col overflow-hidden rounded-t-[9px] rounded-bl-[9px] border-l-2 border-[#a9a9a9] bg-[#ececec] ${FONT}`}>
        {/* Title bar */}
        <header className="grid h-[28px] shrink-0 grid-cols-[1fr_auto_1fr] items-center bg-[#efefef]">
          <div className="flex gap-[9px] pl-2">
            <button type="button" aria-label="Close" className="size-[13px] rounded-full bg-[#fe5f57]" />
            <button type="button" aria-label="Minimise" className="size-[13px] rounded-full bg-[#febc2e]" />
            <button type="button" aria-label="Zoom" className="size-[13px] rounded-full bg-[#28c840]" />
          </div>
          <h1 className="text-sm font-bold text-[#3c3c3c]">*Untitled Project — QGIS</h1>
        </header>

        <div className="border-t border-[#d9d9d9]">
          <ToolBar>
            <ToolGroup tools={fileTools} />
            <ToolGroup tools={navTools} />
            <ToolGroup tools={selectTools} />
            <ToolGroup tools={attributeTools} />
            <button type="button" aria-label="More tools" className="mr-0.5 ml-auto text-base leading-none text-[#333]">»</button>
          </ToolBar>
          <ToolBar>
            <ToolGroup tools={editTools} />
            <ToolGroup tools={shapeTools} />
            <ToolGroup tools={pluginTools} />
          </ToolBar>
          <ToolBar>
            <ToolGroup tools={advancedTools} />
          </ToolBar>
        </div>

        <div className="flex min-h-0 grow">
          <LayersPanel />
          <Splitter />
          <main className="flex min-w-0 grow items-center border border-t-0 border-[#cfcfcf] bg-white px-[13px]">
            <div className="aspect-[587/365] w-full rounded-[2px] bg-black" />
          </main>
          <Splitter />
          <ToolboxPanel />
        </div>

        <StatusBar />

        {/* Highlight over the selected algorithm */}
        <div className="pointer-events-none absolute right-[5px] bottom-[13px] h-[87px] w-[304px] border-[5px] border-[#fb2408]" />
      </div>
    </div>
  );
}
